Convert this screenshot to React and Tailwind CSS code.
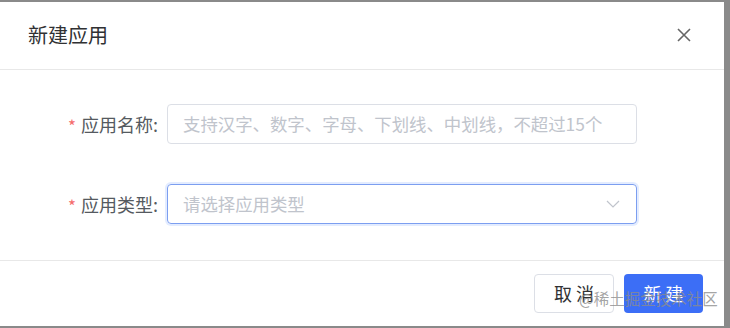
import React from 'react';

const font = { fontFamily: '"Noto Sans CJK SC", "Noto Sans", sans-serif' };

const FormRow = ({ label, children }) => (
    <div className="flex items-center">
        <div className="w-[167px] pr-[9px] flex justify-end items-center text-[18px] text-[#555a60]">
            <span className="text-[#f56c6c] text-[17px] mr-[5px] mt-[4px]">*</span>
            <span>{label}:</span>
        </div>
        {children}
    </div>
);

const App = () => {
    return (
        <div className="w-[730px] h-[328px] bg-[#8a8a8a] pt-[2px] pr-[6px] pb-[2px] overflow-hidden" style={font}>
            <div className="relative w-[724px] h-[324px] bg-white flex flex-col">
                {/* Header */}
                <div className="h-[68px] flex items-center justify-between pl-[28px] pr-[33px] border-b border-[#e8e8e8]">
                    <span className="text-[20px] text-[#303133] mt-[-2px]">新建应用</span>
                    <svg width="14" height="14" viewBox="0 0 14 14" className="mt-[-2px]">
                        <path d="M1 1 L13 13 M13 1 L1 13" stroke="#666" strokeWidth="1.6" fill="none" />
                    </svg>
                </div>

                {/* Body */}
                <div className="flex flex-col gap-[40px] pt-[34px] pb-[36px] border-b border-[#e8e8e8]">
                    <FormRow label="应用名称">
                        <div className="w-[470px] h-[40px] border border-[#dcdfe6] rounded-[4px] flex items-center px-[15px] text-[17.4px] text-[#c0c4cc] whitespace-nowrap overflow-hidden">
                            支持汉字、数字、字母、下划线、中划线，不超过15个
                        </div>
                    </FormRow>
                    <FormRow label="应用类型">
                        <div className="w-[470px] h-[40px] border border-[#7c9ef0] rounded-[4px] shadow-[0_0_0_2px_rgba(64,128,255,0.15)] flex items-center justify-between pl-[15px] pr-[16px] text-[17.4px] text-[#c0c4cc]">
                            <span>请选择应用类型</span>
                            <svg width="14" height="8" viewBox="0 0 14 8">
                                <path d="M1 1 L7 7 L13 1" stroke="#c0c4cc" strokeWidth="1.2" fill="none" />
                            </svg>
                        </div>
                    </FormRow>
                </div>

                {/* Footer */}
                <div className="flex justify-end gap-[10px] pt-[13px] pr-[21px]">
                    <button className="w-[80px] h-[39px] border border-[#dcdfe6] rounded-[4px] bg-white text-[18px] text-[#303133] tracking-[4px] pl-[4px]">
                        取消
                    </button>
                    <button className="w-[79px] h-[39px] rounded-[4px] bg-[#3c6ef6] text-[18px] text-white tracking-[4px] pl-[4px]">
                        新建
                    </button>
                </div>

                {/* Watermark */}
                <span className="absolute left-[579px] top-[285px] text-[15.5px] text-[#8c8c8c]/80 whitespace-nowrap">
                    @稀土掘金技术社区
                </span>
            </div>
        </div>
    );
};

export default App;
